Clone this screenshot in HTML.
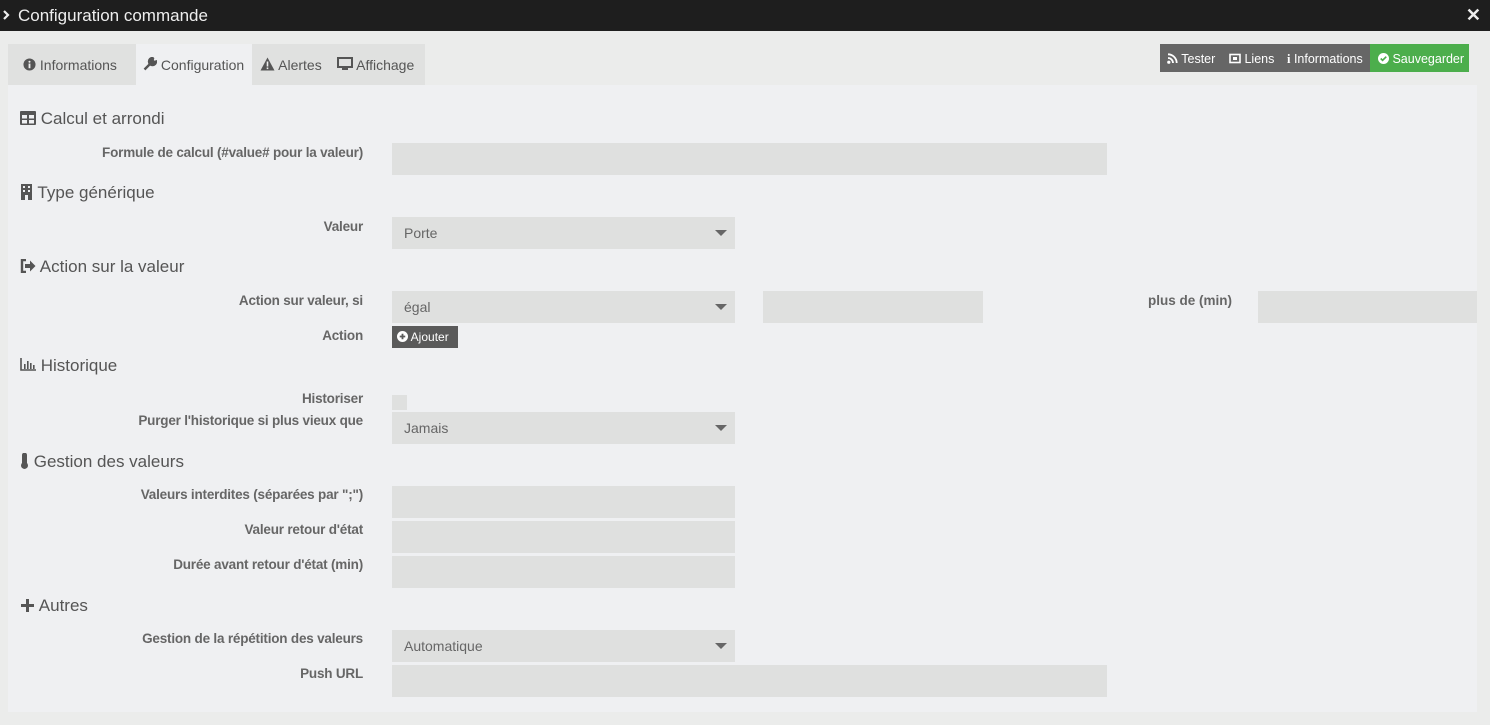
<!DOCTYPE html>
<html><head><meta charset="utf-8"><style>
*{box-sizing:border-box;margin:0;padding:0}
body{width:1490px;height:725px;background:#ebeceb;font-family:"Liberation Sans",sans-serif;color:#555;position:relative;overflow:hidden}
.a{position:absolute}
.title{left:0;top:0;width:1490px;height:31px;background:#1e1e1e;color:#eee;font-size:17px;line-height:31px;padding-left:18px}
.tabs{left:8px;top:44px;width:417px;height:41px;background:#e0e1e0}
.tab{top:45px;height:41px;line-height:41px;font-size:14px;color:#555;white-space:nowrap}
.panel{left:8px;top:85px;width:1469px;height:627px;background:#eff0f2}
.h{font-size:17px;color:#555;white-space:nowrap;margin-top:2px}
.lbl{font-size:13.5px;font-weight:bold;color:#666;text-align:right;width:340px;left:23px;white-space:nowrap;letter-spacing:-0.2px;margin-top:1px}
.in{background:#dfe0df;height:32px}
.sel{background:#dfe0df;height:32px;width:343px;left:392px;font-size:14px;color:#666;line-height:32px;padding-left:12px}
.sel:after{content:"";position:absolute;right:8px;top:13px;border-left:6px solid transparent;border-right:6px solid transparent;border-top:6px solid #666}
.btn{top:44px;height:28px;line-height:28px;font-size:12.5px;color:#fff;white-space:nowrap}
</style></head><body>
<div class="a title"><svg width="8" height="10" viewBox="0 0 8 10" style="position:absolute;left:2px;top:10px"><path d="M2 1l4 4-4 4" stroke="#eee" stroke-width="2.2" fill="none"/></svg>Configuration commande<span style="position:absolute;right:9px;top:0;font-size:18px;font-weight:bold">✕</span></div>
<div class="a tabs"></div>
<div class="a" style="left:136px;top:44px;width:116px;height:42px;background:#eff0f2;border-bottom:1px solid #8bc34a"></div>
<div class="a tab" style="left:23px"><svg width="13" height="13" viewBox="0 0 14 14" style="vertical-align:-1px"><circle cx="7" cy="7" r="6.5" fill="#555"/><rect x="6" y="6" width="2" height="5" fill="#eee"/><circle cx="7" cy="4" r="1.1" fill="#eee"/></svg> Informations</div>
<div class="a tab" style="left:143px"><svg width="14" height="14" viewBox="0 0 14 14" style="vertical-align:-1px"><path d="M1.5 12.5 L7 7 M9.5 1 a3.5 3.5 0 1 0 3.5 3.5 l-2 0.5 -1.5-1.5 0.5-2z" stroke="#555" stroke-width="2.4" fill="#555"/></svg> Configuration</div>
<div class="a tab" style="left:260px"><svg width="15" height="14" viewBox="0 0 15 14" style="vertical-align:-1px"><path d="M7.5 0.5 L14.5 13.5 H0.5Z" fill="#555"/><rect x="6.7" y="4.5" width="1.6" height="5" fill="#eee"/><rect x="6.7" y="10.5" width="1.6" height="1.6" fill="#eee"/></svg> Alertes</div>
<div class="a tab" style="left:337px"><svg width="16" height="14" viewBox="0 0 16 14" style="vertical-align:-1px"><rect x="1" y="1" width="14" height="9" fill="none" stroke="#555" stroke-width="2"/><rect x="5" y="11" width="6" height="2" fill="#555"/></svg> Affichage</div>

<div class="a btn" style="left:1160px;width:210px;background:#666"></div>
<div class="a btn" style="left:1167px;top:45px"><svg width="11" height="11" viewBox="0 0 11 11" style="vertical-align:-1px"><circle cx="1.8" cy="9.2" r="1.6" fill="#fff"/><path d="M1 5a5 5 0 0 1 5 5M1 1.3a8.7 8.7 0 0 1 8.7 8.7" stroke="#fff" stroke-width="1.8" fill="none"/></svg> Tester</div>
<div class="a btn" style="left:1229px;top:45px"><svg width="12" height="11" viewBox="0 0 12 11" style="vertical-align:-1px"><rect x="1" y="1.5" width="10" height="8" fill="none" stroke="#fff" stroke-width="1.6"/><rect x="4" y="4" width="4" height="3" fill="#fff"/></svg> Liens</div>
<div class="a btn" style="left:1287px;top:45px"><b style="font-family:serif">i</b> Informations</div>
<div class="a btn" style="left:1370px;width:99px;background:#4cae4c;padding-left:8px;padding-top:1px"><svg width="11" height="11" viewBox="0 0 12 12" style="vertical-align:-1px"><circle cx="6" cy="6" r="6" fill="#fff"/><path d="M3 6l2 2 4-4" stroke="#4cae4c" stroke-width="1.8" fill="none"/></svg> Sauvegarder</div>

<div class="a panel"></div>

<div class="a h" style="left:20px;top:107px"><svg width="16" height="14" viewBox="0 0 16 14" style="vertical-align:-1px"><rect x="0" y="0" width="16" height="14" rx="1" fill="#555"/><rect x="2" y="4" width="5" height="3.5" fill="#eff0f2"/><rect x="9" y="4" width="5" height="3.5" fill="#eff0f2"/><rect x="2" y="9" width="5" height="3.5" fill="#eff0f2"/><rect x="9" y="9" width="5" height="3.5" fill="#eff0f2"/></svg> Calcul et arrondi</div>
<div class="a lbl" style="top:144px">Formule de calcul (#value# pour la valeur)</div>
<div class="a in" style="left:392px;top:143px;width:715px"></div>

<div class="a h" style="left:20px;top:181px"><svg width="13" height="16" viewBox="0 0 13 16" style="vertical-align:-2px"><rect x="1" y="0" width="11" height="16" fill="#555"/><g fill="#eff0f2"><rect x="3" y="2" width="2" height="2"/><rect x="8" y="2" width="2" height="2"/><rect x="3" y="6" width="2" height="2"/><rect x="8" y="6" width="2" height="2"/><rect x="5" y="11" width="3" height="5"/></g></svg> Type générique</div>
<div class="a lbl" style="top:218px">Valeur</div>
<div class="a sel" style="top:217px">Porte</div>

<div class="a h" style="left:20px;top:255px"><svg width="16" height="14" viewBox="0 0 16 14" style="vertical-align:-1px"><path d="M6 1H2v12h4" stroke="#555" stroke-width="2.4" fill="none"/><path d="M5 5h5V1.5l5.5 5.5-5.5 5.5V9H5z" fill="#555"/></svg> Action sur la valeur</div>
<div class="a lbl" style="top:292px">Action sur valeur, si</div>
<div class="a sel" style="top:291px">égal</div>
<div class="a in" style="left:763px;top:291px;width:220px"></div>
<div class="a" style="left:1148px;top:293px;font-size:13.5px;font-weight:bold;color:#666">plus de (min)</div>
<div class="a in" style="left:1258px;top:291px;width:219px"></div>
<div class="a lbl" style="top:327px">Action</div>
<div class="a" style="left:392px;top:326px;width:66px;height:22px;background:#5a5a5a;color:#fff;font-size:12px;line-height:22px;padding-left:5px"><svg width="11" height="11" viewBox="0 0 12 12" style="vertical-align:-1px"><circle cx="6" cy="6" r="6" fill="#fff"/><path d="M6 3v6M3 6h6" stroke="#5a5a5a" stroke-width="2"/></svg> Ajouter</div>

<div class="a h" style="left:20px;top:354px"><svg width="16" height="13" viewBox="0 0 16 13" style="vertical-align:0"><path d="M1 0v12h15" stroke="#555" stroke-width="1.6" fill="none"/><rect x="4" y="6" width="1.6" height="5" fill="#555"/><rect x="7" y="3" width="1.6" height="8" fill="#555"/><rect x="10" y="5" width="1.6" height="6" fill="#555"/><rect x="13" y="7" width="1.6" height="4" fill="#555"/></svg> Historique</div>
<div class="a lbl" style="top:390px">Historiser</div>
<div class="a in" style="left:392px;top:395px;width:15px;height:15px"></div>
<div class="a lbl" style="top:412px">Purger l'historique si plus vieux que</div>
<div class="a sel" style="top:412px">Jamais</div>

<div class="a h" style="left:20px;top:450px"><svg width="9" height="16" viewBox="0 0 9 16" style="vertical-align:-2px"><path d="M2 2a2.5 2.5 0 0 1 5 0v8a3.5 3.5 0 1 1-5 0z" fill="#555"/></svg> Gestion des valeurs</div>
<div class="a lbl" style="top:486px">Valeurs interdites (séparées par ";")</div>
<div class="a in" style="left:392px;top:486px;width:343px"></div>
<div class="a lbl" style="top:521px">Valeur retour d'état</div>
<div class="a in" style="left:392px;top:521px;width:343px"></div>
<div class="a lbl" style="top:556px">Durée avant retour d'état (min)</div>
<div class="a in" style="left:392px;top:556px;width:343px"></div>

<div class="a h" style="left:20px;top:594px"><svg width="15" height="15" viewBox="0 0 15 15" style="vertical-align:-2px"><path d="M7.5 1v13M1 7.5h13" stroke="#555" stroke-width="3"/></svg> Autres</div>
<div class="a lbl" style="top:630px">Gestion de la répétition des valeurs</div>
<div class="a sel" style="top:630px">Automatique</div>
<div class="a lbl" style="top:665px">Push URL</div>
<div class="a in" style="left:392px;top:665px;width:715px"></div>
</body></html>
